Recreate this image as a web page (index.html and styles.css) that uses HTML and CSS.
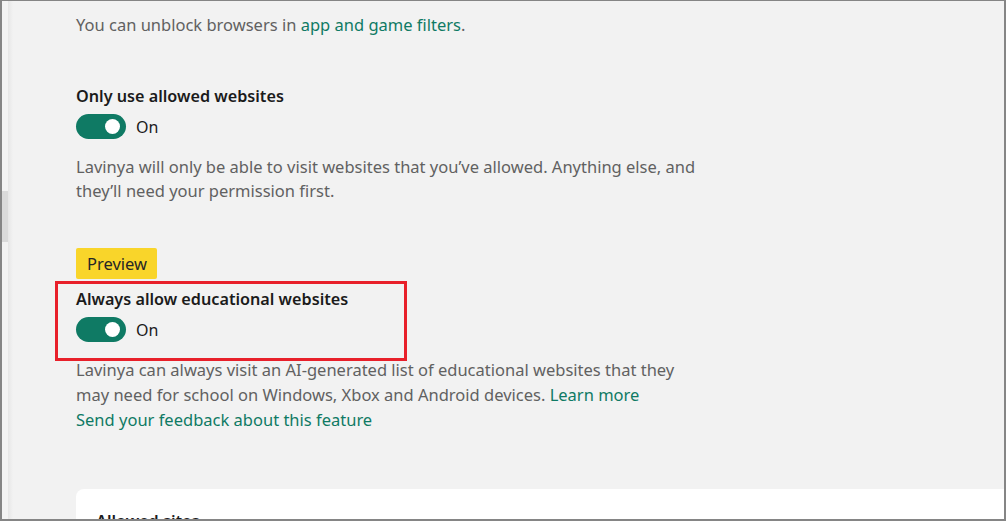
FILE: index.html
```html
<!DOCTYPE html>
<html lang="en">
<head>
    <meta charset="UTF-8">
    <meta name="viewport" content="width=device-width, initial-scale=1.0">
    <title>Content filters</title>
    <link rel="stylesheet" href="styles.css">
</head>
<body>
    <div class="window">
        <div class="rail"><div class="thumb"></div></div>

        <div class="main">
            <p class="desc first">You can unblock browsers in <a href="#">app and game filters</a>.</p>

            <div class="setting">
                <h3>Only use allowed websites</h3>
                <div class="toggle-row">
                    <span class="toggle"><span class="knob"></span></span>
                    <span class="toggle-label">On</span>
                </div>
                <p class="desc">Lavinya will only be able to visit websites that you’ve allowed. Anything else, and<br>they’ll need your permission first.</p>
            </div>

            <div class="setting preview-setting">
                <span class="badge">Preview</span>
                <div class="highlight">
                    <h3>Always allow educational websites</h3>
                    <div class="toggle-row">
                        <span class="toggle"><span class="knob"></span></span>
                        <span class="toggle-label">On</span>
                    </div>
                </div>
                <p class="desc">Lavinya can always visit an AI-generated list of educational websites that they<br>may need for school on Windows, Xbox and Android devices. <a href="#">Learn more</a><br><a href="#">Send your feedback about this feature</a></p>
            </div>

            <div class="card">
                <h3>Allowed sites</h3>
            </div>
        </div>
    </div>
</body>
</html>
```

FILE: styles.css
```css
html, body { margin: 0; padding: 0; height: 100%; }
body {
    font-family: "Segoe UI", "Noto Sans", sans-serif;
    font-size: 16px;
    color: #1b1b1b;
    background: #f2f2f2;
}
.window {
    height: 521px; box-sizing: border-box;
    border: 1px solid #858585; border-left-width: 2px; border-right-width: 2px; border-bottom-width: 2px;
    display: flex; overflow: hidden;
}
.rail { width: 6px; background: #f3f3f3; position: relative; flex: none; }
.thumb { position: absolute; top: 190px; left: 0; width: 6px; height: 51px; background: #dadada; }
.main {
    flex: 1; padding-left: 68px; overflow: hidden;
    background: linear-gradient(to right, #e6e6e6 0, #f2f2f2 5px);
}
p { margin: 0; }
a { color: #0f7a64; text-decoration: none; }
.desc { color: #616161; font-size: 16.5px; line-height: 24px; }
.desc.first { padding-top: 12px; }
h3 { margin: 0; font-size: 16.2px; font-weight: 600; line-height: 24px; color: #1b1b1b; }

.setting { margin-top: 47px; }
.toggle-row { display: flex; align-items: center; gap: 10px; margin-top: 6px; height: 25px; }
.toggle {
    width: 50px; height: 25px; border-radius: 13px; background: #0f7a64;
    display: flex; align-items: center; justify-content: flex-end; padding-right: 6px; box-sizing: border-box;
}
.knob { width: 15px; height: 15px; border-radius: 50%; background: #fff; }
.toggle-label { color: #1b1b1b; }
.setting > .desc { margin-top: 16px; }

.preview-setting { margin-top: 45px; }
.badge {
    display: inline-block; background: #f9d52a; color: #262626;
    font-size: 16.5px; padding: 0 10px 0 11px; line-height: 31px; border-radius: 2px;
}
.highlight {
    margin: 2px 0 0 -21px; width: 352px; height: 80px; box-sizing: border-box;
    border: 3px solid #e8202a; padding: 3px 0 0 18px;
}
.preview-setting .desc { margin-top: -4px; line-height: 25px; }

.card {
    margin-top: 57px; margin-right: -20px;
    background: #fff; border-radius: 8px 0 0 0;
    padding: 20px 20px 40px;
}
```
